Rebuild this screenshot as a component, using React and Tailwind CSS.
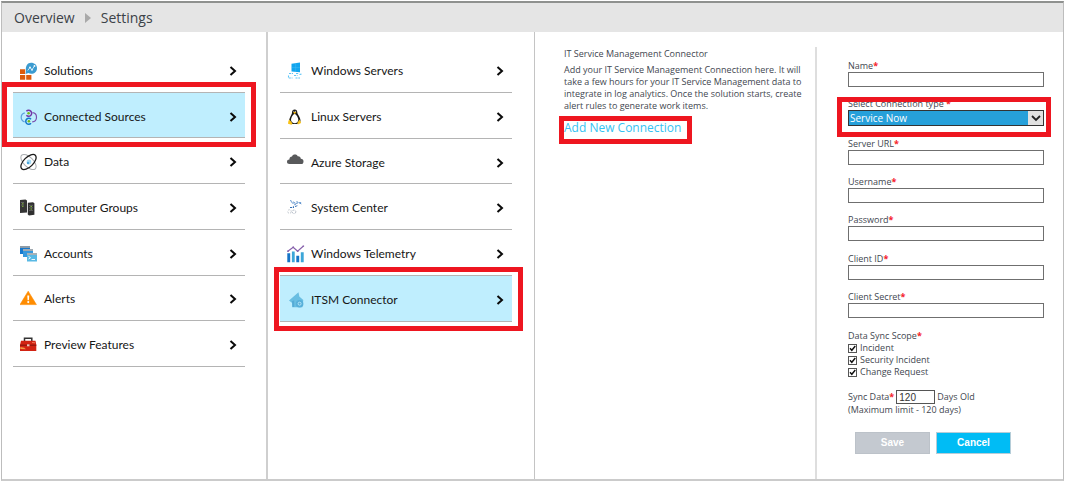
import React from "react";

function SolutionsIcon() {
  return (
    <svg viewBox="0 0 18 18" className="size-[18px] shrink-0" aria-hidden="true">
      <path d="M0 7.200h5.200v4.800H0zM0 13h5.200v4.800H0zM6.200 13h5.200v4.800H6.200z" fill="#dc5b0c" />
      <path d="M11 .8c3.600 0 6 2.300 6 5.400s-2.500 5.600-5.700 5.600c-1.200 0-2-.2-2.800-.7L5.600 12l.4-3.200C5.200 4.300 7.600.8 11 .8z" fill="#3b9bd0" />
      <path d="M7.700 8.500l2.300-3 2 2.200 2.500-3.700" fill="none" stroke="#c9e8f7" strokeWidth="1" />
      <circle cx="10" cy="5.400" r=".9" fill="#fff" />
      <circle cx="12" cy="7.800" r=".9" fill="#fff" />
      <circle cx="14.500" cy="3.900" r=".9" fill="#fff" />
    </svg>
  );
}

function ConnectedIcon() {
  return (
    <svg viewBox="0 0 18 18" className="size-[18px] shrink-0" aria-hidden="true" fill="none" strokeWidth="1.200">
      <path d="M4.800 4.800C2.500 5.300 1.200 7 1.200 9.300s1.200 4 3.400 4.600" stroke="#5b9fdc" />
      <path d="M12.500 4.600c2.600.2 4 2 4 4.600 0 2.700-1.500 4.500-4.300 4.700" stroke="#7a4fae" />
      <path d="M6.400 3.300a3 3 0 1 1 0 4" stroke="#7236a8" strokeWidth="1.500" />
      <path d="M11 11.300a3 3 0 1 0 0 4" stroke="#1579c9" strokeWidth="1.500" />
      <circle cx="8.600" cy="5.300" r="1.300" fill="#74b917" />
      <circle cx="8.900" cy="13.300" r="1.300" fill="#74b917" />
    </svg>
  );
}

function DataIcon() {
  return (
    <svg viewBox="0 0 18 18" className="size-[18px] shrink-0" aria-hidden="true" fill="none">
      <ellipse cx="8.500" cy="9" rx="9.600" ry="4.800" transform="rotate(45 8.500 9)" stroke="#a9adb1" strokeWidth="1" />
      <ellipse cx="8.500" cy="9" rx="9.600" ry="4.800" transform="rotate(-45 8.500 9)" stroke="#1b1b1b" strokeWidth="1.300" />
      <circle cx="9" cy="9" r="2.400" fill="#a5daf4" />
      <circle cx="8" cy="10" r="1.200" fill="#4aa5dc" />
    </svg>
  );
}

function GroupsIcon() {
  return (
    <svg viewBox="0 0 18 18" className="size-[18px] shrink-0" aria-hidden="true">
      <path d="M0 1l5.500-.6L7 1.500v12L0 14z" fill="#353535" />
      <path d="M7.800 3.800l5.200-.6 1.400 1v11.600L9 16.500l-1.200-1z" fill="#303030" />
      <path d="M1 3.500h3M1 6h3M9 6.300h4M9 8.800h4M9 11.300h4" stroke="#6e6e6e" strokeWidth=".8" />
      <path d="M2 4.800h1.500M2 7.300h1.500M10.500 7.500H12M10.500 10H12" stroke="#82b83a" strokeWidth="1" />
    </svg>
  );
}

function AccountsIcon() {
  return (
    <svg viewBox="0 0 18 18" className="size-[18px] shrink-0" aria-hidden="true">
      <path d="M0 1h10v8H0z" fill="#1679ce" />
      <path d="M0 1h10v2H0z" fill="#8e9ba6" />
      <path d="M3 4h10v8H3z" fill="#3798dc" />
      <path d="M3 4h10v2H3z" fill="#a1aab1" />
      <path d="M7 8h10v8.500H7z" fill="#59b9e4" />
      <path d="M7 8h10v2H7z" fill="#a7b1b7" />
      <path d="M8.500 11.300l2 1.400-2 1.400M11.500 14.500h3.500" fill="none" stroke="#fff" strokeWidth=".9" />
    </svg>
  );
}

function AlertsIcon() {
  return (
    <svg viewBox="0 0 18 18" className="size-[18px] shrink-0" aria-hidden="true">
      <path d="M8.200 1.200L16.400 14.600H0z" fill="#ff8c00" stroke="#ff8c00" strokeWidth=".6" strokeLinejoin="round" />
      <path d="M7.300 5.500h1.900l-.3 4.700H7.600z" fill="#fff" />
      <circle cx="8.250" cy="12.100" r="1.050" fill="#fff" />
    </svg>
  );
}

function ToolboxIcon() {
  return (
    <svg viewBox="0 0 18 18" className="size-[18px] shrink-0" aria-hidden="true">
      <path d="M4.500 5V2.300h7.300V5" fill="none" stroke="#343434" strokeWidth="1.500" />
      <path d="M1 4.700h14.500l.8 4.300v6H0V9z" fill="#d22313" />
      <path d="M0 9.200h16.300" stroke="#8e160d" strokeWidth="1.200" />
      <path d="M7 8.300h2.500v2H7z" fill="#ecc7bd" />
      <path d="M.3 11l4 .8 1.500 1.500-5.500-.4z" fill="#f19a45" />
      <path d="M12 6.500l3 .3" stroke="#ef7754" strokeWidth="1" />
    </svg>
  );
}

function WindowsServerIcon() {
  return (
    <svg viewBox="0 0 18 18" className="size-[18px] shrink-0" aria-hidden="true">
      <path d="M4.500 1.700L13 .6v9.600L4.500 9.600z" fill="#11a5ee" />
      <path d="M8.700 1v9M5 5.600h8" stroke="#53c3f7" strokeWidth=".4" />
      <path d="M2 11.500h4M9 11.500h3M1.500 13.500v2.500h4M7 13.500h3.500M8.500 16h4.500M12.500 12.500l2.500-.5" fill="none" stroke="#5fc5f5" strokeWidth="1.100" strokeDasharray="2 .8" />
    </svg>
  );
}

function LinuxIcon() {
  return (
    <svg viewBox="0 0 18 18" className="size-[18px] shrink-0" aria-hidden="true">
      <path d="M7.700 1.500c1.700 0 2.600 1.100 2.600 2.800 0 2.500 3.400 4.600 3.200 9.200L10 16H5.500L2 13.500c.2-4.300 3-6.500 3-9 0-1.900 1-3 2.700-3z" fill="#171717" />
      <path d="M7.600 6c1.400 0 3.700 3.400 3.700 6 0 1.900-1.600 3.200-3.500 3.200S4 13.900 4 12c0-2.600 2.300-6 3.600-6z" fill="#fff" />
      <path d="M6.100 4.600l1.600-.8 1.700.8-1.700 1.300z" fill="#f4b90c" />
      <path d="M2.400 11.500l3 3.700-.7 1.500-3.700-1 .4-2.800zM12.800 11.500l-2.400 3 .5 2 3.200-1.500z" fill="#f8c216" />
      <circle cx="6.900" cy="3.300" r=".5" fill="#fff" />
      <circle cx="8.600" cy="3.300" r=".5" fill="#fff" />
    </svg>
  );
}

function CloudIcon() {
  return (
    <svg viewBox="0 0 18 18" className="size-[18px] shrink-0" aria-hidden="true">
      <path d="M2.500 10C.8 10 0 9 0 7.700c0-1.400 1-2.300 2.400-2.300C2.500 3.500 3.500 2.600 5 2.600c.5-1.400 1.500-2 3-2 1.400 0 2.300.6 2.700 1.700 1.900-.2 3 .9 3.100 2.500 1.800 0 2.700 1.200 2.700 2.600 0 1.600-.8 2.600-2.400 2.600z" fill="#58595b" />
    </svg>
  );
}

function SystemCenterIcon() {
  return (
    <svg viewBox="0 0 18 18" className="size-[18px] shrink-0" aria-hidden="true" fill="none">
      <path d="M3 1.500l6 2.800 5.500-.8M9 4.300L6 8M4.500 3.500l4 2M9.500 2.500l5 2.500" stroke="#5f93ce" strokeWidth="1" strokeDasharray="2.200 1" />
      <path d="M3 8.500h4M8 7.500l3-1" stroke="#356fb4" strokeWidth="1" strokeDasharray="2 .8" />
      <circle cx="2.500" cy="12.500" r="1.800" stroke="#c5cbd2" strokeWidth="1" strokeDasharray="2 1" />
      <circle cx="7" cy="12.800" r="1.800" stroke="#b7bec9" strokeWidth="1" strokeDasharray="2 1" />
    </svg>
  );
}

function TelemetryIcon() {
  return (
    <svg viewBox="0 0 18 18" className="size-[18px] shrink-0" aria-hidden="true">
      <path d="M.3 8.300h2.900v9H.3zM9.300 10.700h2.900v6.600H9.300z" fill="#1574c7" />
      <path d="M4.900 6.500h2.800v10.800H4.900zM13.800 7.300h2.900v10h-2.900z" fill="#3ca6d8" />
      <path d="M.8 6.300L6.200 2.300l4.400 4L16.500 1" fill="none" stroke="#8660ab" strokeWidth="1.200" />
      <path d="M.2 5.600h1.500V7H.2zM5.500 1.600H7V3H5.500zM9.900 5.600h1.500V7H9.900zM15.700.4h1.400v1.400h-1.400z" fill="#8660ab" />
    </svg>
  );
}

function ItsmIcon() {
  return (
    <svg viewBox="0 0 18 18" className="size-[18px] shrink-0" aria-hidden="true">
      <path d="M2 9.500L11.500 1.200l.8 4.300 4 3.500-1 7.200H5.200V12z" fill="#69bee2" />
      <path d="M5 10.200l2.200-1v6.800H5.500z" fill="#55abd6" />
      <circle cx="12.600" cy="12.700" r="3.800" fill="#58b0da" />
      <circle cx="12.600" cy="12.700" r="1.500" fill="none" stroke="#b4e6f8" strokeWidth="1" />
    </svg>
  );
}

const SOURCES = [
  { label: "Solutions", Icon: SolutionsIcon },
  { label: "Connected Sources", Icon: ConnectedIcon, selected: true },
  { label: "Data", Icon: DataIcon },
  { label: "Computer Groups", Icon: GroupsIcon },
  { label: "Accounts", Icon: AccountsIcon },
  { label: "Alerts", Icon: AlertsIcon },
  { label: "Preview Features", Icon: ToolboxIcon },
];

const CONNECTORS = [
  { label: "Windows Servers", Icon: WindowsServerIcon },
  { label: "Linux Servers", Icon: LinuxIcon },
  { label: "Azure Storage", Icon: CloudIcon },
  { label: "System Center", Icon: SystemCenterIcon },
  { label: "Windows Telemetry", Icon: TelemetryIcon },
  { label: "ITSM Connector", Icon: ItsmIcon, selected: true },
];

function NavItem({ label, Icon, selected, frame }) {
  return (
    <li className="relative">
      <button
        type="button"
        className={
          "flex h-full w-full items-center gap-1.5 border-b border-[#b4b4b4] pt-[3px] pr-2 pl-[7px] text-left font-[Lato,'Open_Sans',sans-serif] text-[12px] leading-4 text-[#161616] " +
          (selected ? "bg-[#bfeefe]" : "bg-white")
        }
      >
        <Icon />
        <span className="grow">{label}</span>
        <svg viewBox="0 0 8 10" className="h-[10px] w-2 shrink-0" aria-hidden="true">
          <path d="M1.500 1L6 5 1.500 9" fill="none" stroke="#0a0a0a" strokeWidth="2" />
        </svg>
      </button>
      {selected && <span className={"pointer-events-none absolute z-10 border-5 border-[#ee1620] " + frame} />}
    </li>
  );
}

function Req() {
  return <span className="font-bold text-[#f5222a]">*</span>;
}

function Field({ id, label, type = "text" }) {
  return (
    <div className="flex flex-col">
      <label htmlFor={id} className="leading-3">{label}<Req /></label>
      <input id={id} type={type} className="h-[15px] w-full border border-[#6f6f6f] bg-white px-1 outline-none" />
    </div>
  );
}

function Check({ label }) {
  return (
    <label className="flex items-center gap-[3px] leading-3">
      <span className="grid size-[9px]">
        <input type="checkbox" defaultChecked className="peer col-start-1 row-start-1 size-[9px] appearance-none border border-[#555] bg-white" />
        <svg viewBox="0 0 9 9" className="pointer-events-none col-start-1 row-start-1 hidden size-[9px] peer-checked:block" aria-hidden="true">
          <path d="M2 4.300l1.800 2L7.300 2" fill="none" stroke="#111" strokeWidth="1.400" />
        </svg>
      </span>
      {label}
    </label>
  );
}

export default function App() {
  return (
    <div className="flex min-h-screen flex-col bg-white px-px pt-px font-['Open_Sans','Noto_Sans',sans-serif]">
      <div className="flex grow flex-col border-t-2 border-r border-b-2 border-l border-t-[#8f918f] border-r-[#bdbdbd] border-b-[#cbcbcb] border-l-[#bdbdbd]">
        <header className="flex h-[29px] items-center gap-2.5 bg-[#e5e5e5] pl-3 text-[14px] text-[#3c4248]">
          <a href="#overview">Overview</a>
          <svg viewBox="0 0 6 10" className="h-[10px] w-1.5" aria-hidden="true">
            <path d="M0 0l6 5-6 5z" fill="#a9a9a9" />
          </svg>
          <h1>Settings</h1>
        </header>
        <main className="grid grow grid-cols-[266fr_267fr_280fr_248fr]">
          <nav aria-label="Settings" className="border-r-2 border-[#cfcfcf] pt-[15px] pr-[21px] pl-[11px]">
            <ul className="grid h-80 auto-rows-fr">
              {SOURCES.map((s) => (
                <NavItem key={s.label} {...s} frame="-top-[11px] -right-[11px] -bottom-[9px] -left-[11px]" />
              ))}
            </ul>
          </nav>
          <nav aria-label="Connected sources" className="border-r border-[#c4c4c4] pt-[15px] pr-[22px] pl-3">
            <ul className="grid h-[275px] auto-rows-fr">
              {CONNECTORS.map((s) => (
                <NavItem key={s.label} {...s} frame="-top-[9px] -right-[11px] -bottom-[9px] -left-[6px]" />
              ))}
            </ul>
          </nav>
          <section className="flex flex-col items-start pt-4 pr-1.5 pl-[29px] text-[9px] leading-3 text-[#3f4750]">
            <h2>IT Service Management Connector</h2>
            <p className="pt-1">
              Add your IT Service Management Connection here. It will take a few hours for your IT Service Management data to
              integrate in log analytics. Once the solution starts, create alert rules to generate work items.
            </p>
            <div className="relative mt-2">
              <a href="#new" className="block text-[12px] leading-4 whitespace-nowrap text-[#36c2f2]">Add New Connection</a>
              <span className="pointer-events-none absolute -top-1 -right-[11px] -bottom-2 -left-[5px] border-5 border-[#ee1620]" />
            </div>
          </section>
          <div className="flex pt-[15px]">
            <form className="grow border-l-2 border-[#dedede] pt-[13px] pr-[19px] pl-[31px] text-[9px] leading-3 text-[#3f4750]" onSubmit={(e) => e.preventDefault()}>
              <div className="flex h-[258px] flex-col justify-between">
                <Field id="name" label="Name" />
                <div className="relative flex flex-col">
                  <label htmlFor="type" className="leading-3">Select Connection type <Req /></label>
                  <div className="flex h-4 border border-[#333] bg-[#26a0da]">
                    <select id="type" className="w-full appearance-none bg-[#26a0da] px-px text-[10px] leading-3 text-white outline-none">
                      <option>Service Now</option>
                    </select>
                    <span className="pointer-events-none flex w-[15px] shrink-0 items-center justify-center bg-[#e1e1e1]">
                      <svg viewBox="0 0 10 7" className="h-[7px] w-[10px]" aria-hidden="true">
                        <path d="M1 1l4 4 4-4" fill="none" stroke="#222" strokeWidth="1.800" />
                      </svg>
                    </span>
                  </div>
                  <span className="pointer-events-none absolute -top-px -right-[7px] -bottom-[11px] -left-[11px] border-5 border-[#ee1620]" />
                </div>
                <Field id="server" label="Server URL" />
                <Field id="user" label="Username" />
                <Field id="password" label="Password" type="password" />
                <Field id="client" label="Client ID" />
                <Field id="secret" label="Client Secret" />
              </div>
              <fieldset className="mt-3">
                <legend>Data Sync Scope<Req /></legend>
                <Check label="Incident" />
                <Check label="Security Incident" />
                <Check label="Change Request" />
              </fieldset>
              <div className="flex items-center gap-0.5 pt-3 whitespace-nowrap">
                <label htmlFor="days">Sync Data<Req /></label>
                <input id="days" type="text" defaultValue="120" className="h-[14px] w-[39px] border border-[#555] px-0.5 font-['Liberation_Sans',sans-serif] text-[10px] text-[#333] outline-none" />
                <span>Days Old</span>
              </div>
              <p>(Maximum limit - 120 days)</p>
              <div className="flex gap-1.5 pt-4 pb-6 pl-[7px] font-['Liberation_Sans',sans-serif] text-[10px] font-bold text-white">
                <button type="submit" className="h-[22px] w-[75px] border border-[#bcc2c9] bg-[#c4c9d0]">Save</button>
                <button type="button" className="h-[22px] w-[75px] border border-[#b5cdd8] bg-[#00bcf5]">Cancel</button>
              </div>
            </form>
          </div>
        </main>
      </div>
    </div>
  );
}
